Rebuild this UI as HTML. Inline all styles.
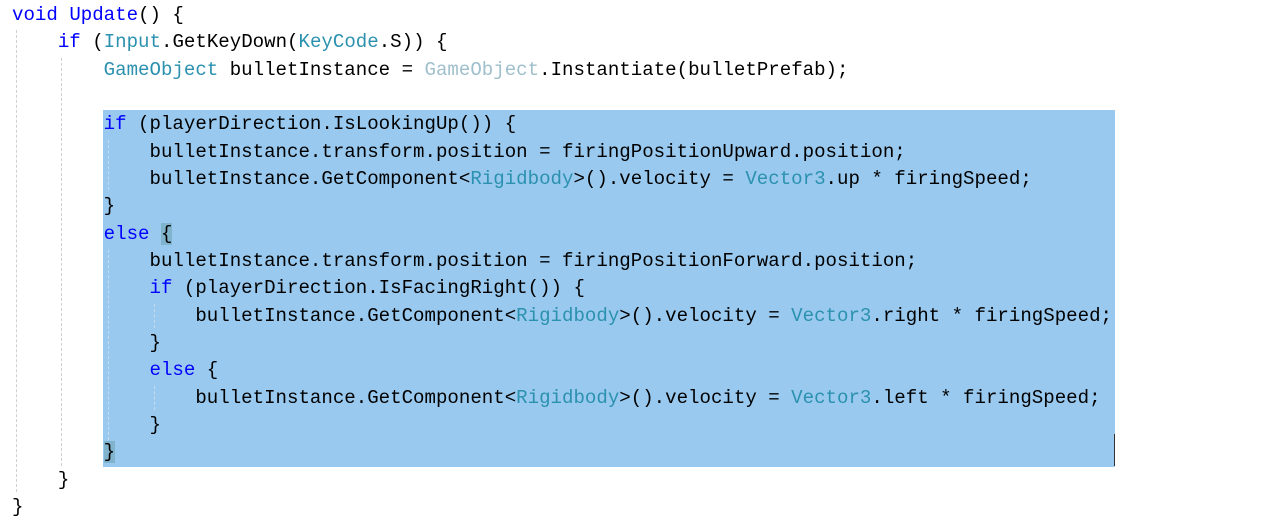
<!DOCTYPE html>
<html><head><meta charset="utf-8"><style>
html,body{margin:0;padding:0;background:#fff;width:1272px;height:526px;overflow:hidden;position:relative}
.l{position:absolute;left:12px;white-space:pre;font-family:"Liberation Mono",monospace;font-size:19.1px;line-height:27.33px;height:27.33px;color:#000;margin-top:1.5px}
.k{color:#0000ff}.t{color:#2b91af}.f{color:#9fbfcc}
.sel{position:absolute;left:103px;top:110px;width:1012px;height:357px;background:#99c9ef}
.g{position:absolute;width:0;border-left:1px dashed #d0d0d0}
.gi{position:absolute;width:0;border-left:1px dashed #c6dcec}
.bh{background:#80b3cc}
.cur{position:absolute;left:1114px;top:434px;width:1px;height:32px;background:#333}
</style></head><body>
<div class="sel"></div>
<div class="g" style="left:16px;top:30px;height:462px"></div>
<div class="g" style="left:61px;top:58px;height:408px"></div>
<div class="gi" style="left:108px;top:140px;height:50px"></div>
<div class="gi" style="left:108px;top:250px;height:190px"></div>
<div class="gi" style="left:154px;top:304px;height:24px"></div>
<div class="gi" style="left:154px;top:386px;height:24px"></div>
<div class="cur"></div>
<div class="l" style="top:0.5px"><span class="k">void</span> <span class="k">Update</span>() {</div>
<div class="l" style="top:27.8px">    <span class="k">if</span> (<span class="t">Input</span>.GetKeyDown(<span class="t">KeyCode</span>.S)) {</div>
<div class="l" style="top:55.2px">        <span class="t">GameObject</span> bulletInstance = <span class="f">GameObject</span>.Instantiate(bulletPrefab);</div>
<div class="l" style="top:109.8px">        <span class="k">if</span> (playerDirection.IsLookingUp()) {</div>
<div class="l" style="top:137.2px">            bulletInstance.transform.position = firingPositionUpward.position;</div>
<div class="l" style="top:164.5px">            bulletInstance.GetComponent&lt;<span class="t">Rigidbody</span>&gt;().velocity = <span class="t">Vector3</span>.up * firingSpeed;</div>
<div class="l" style="top:191.8px">        }</div>
<div class="l" style="top:219.2px">        <span class="k">else</span> <span class="bh">{</span></div>
<div class="l" style="top:246.5px">            bulletInstance.transform.position = firingPositionForward.position;</div>
<div class="l" style="top:273.8px">            <span class="k">if</span> (playerDirection.IsFacingRight()) {</div>
<div class="l" style="top:301.2px">                bulletInstance.GetComponent&lt;<span class="t">Rigidbody</span>&gt;().velocity = <span class="t">Vector3</span>.right * firingSpeed;</div>
<div class="l" style="top:328.5px">            }</div>
<div class="l" style="top:355.8px">            <span class="k">else</span> {</div>
<div class="l" style="top:383.2px">                bulletInstance.GetComponent&lt;<span class="t">Rigidbody</span>&gt;().velocity = <span class="t">Vector3</span>.left * firingSpeed;</div>
<div class="l" style="top:410.5px">            }</div>
<div class="l" style="top:437.8px">        <span class="bh">}</span></div>
<div class="l" style="top:465.2px">    }</div>
<div class="l" style="top:492.5px">}</div>
</body></html>
